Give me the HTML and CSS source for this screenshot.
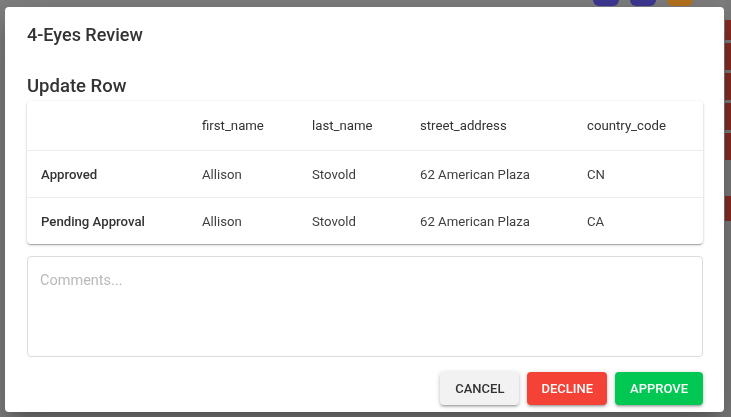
FILE: index.html
```html
<!DOCTYPE html>
<html lang="en">
<head>
<meta charset="utf-8">
<title>4-Eyes Review</title>
<link rel="stylesheet" href="styles.css">
</head>
<body>
<div class="page">
  <div class="main">
    <div class="toolbar">
      <span class="tb-btn purple"></span>
      <span class="tb-btn purple"></span>
      <span class="tb-btn orange"></span>
    </div>
  </div>
  <div class="rail">
    <span class="rb rb-first"></span>
    <span class="rb"></span>
    <span class="rb"></span>
    <span class="rb"></span>
    <span class="rb"></span>
    <span class="rb rb-last"></span>
  </div>
</div>

<div class="overlay">
  <div class="modal">
    <h1 class="modal-title">4-Eyes Review</h1>
    <h2 class="section-title">Update Row</h2>
    <div class="card">
      <div class="trow head">
        <div class="cell"></div>
        <div class="cell">first_name</div>
        <div class="cell">last_name</div>
        <div class="cell">street_address</div>
        <div class="cell">country_code</div>
      </div>
      <div class="trow">
        <div class="cell label">Approved</div>
        <div class="cell">Allison</div>
        <div class="cell">Stovold</div>
        <div class="cell">62 American Plaza</div>
        <div class="cell">CN</div>
      </div>
      <div class="trow last">
        <div class="cell label">Pending Approval</div>
        <div class="cell">Allison</div>
        <div class="cell">Stovold</div>
        <div class="cell">62 American Plaza</div>
        <div class="cell">CA</div>
      </div>
    </div>
    <textarea class="comments" placeholder="Comments..."></textarea>
    <div class="actions">
      <button class="btn cancel">Cancel</button>
      <button class="btn decline">Decline</button>
      <button class="btn approve">Approve</button>
    </div>
  </div>
</div>
</body>
</html>
```

FILE: styles.css
```css
html, body {
  margin: 0;
  padding: 0;
}
body {
  background: #7f7f7f;
  font-family: Roboto, "Liberation Sans", Arial, sans-serif;
  width: 731px;
  height: 417px;
  overflow: hidden;
}

/* dimmed background page */
.page {
  display: flex;
  height: 417px;
  overflow: hidden;
}
.main {
  flex: 1;
}
.toolbar {
  display: flex;
  justify-content: flex-end;
  gap: 11px;
  padding-right: 32px;
  height: 6px;
  overflow: hidden;
}
.tb-btn {
  width: 26px;
  height: 6px;
  border-radius: 0 0 6px 6px;
}
.tb-btn.purple { background: #3e3894; }
.tb-btn.orange { background: #b8741e; }
.rail {
  width: 6px;
  padding-top: 20px;
  display: flex;
  flex-direction: column;
  gap: 3px;
  background: #7c7c7c;
}
.rb {
  height: 27px;
  background: #8a2c23;
  flex: none;
}
.rb-first { height: 20px; }
.rb-last { margin-top: 33px; height: 25px; }

/* modal */
.overlay {
  position: fixed;
  inset: 0;
  padding: 7px 7px 5px 5px;
  box-sizing: border-box;
}
.modal {
  background: #fff;
  border-radius: 4px;
  height: 100%;
  box-sizing: border-box;
  padding: 17px 21px 7px 22px;
  box-shadow: 0 11px 15px -7px rgba(0,0,0,.2), 0 24px 38px 3px rgba(0,0,0,.14), 0 9px 46px 8px rgba(0,0,0,.12);
  display: flex;
  flex-direction: column;
}
.modal-title {
  margin: 0;
  font-size: 18px;
  font-weight: 500;
  line-height: 22px;
  color: #333;
  height: 22px;
}
.section-title {
  margin: 28px 0 3px;
  font-size: 18.5px;
  font-weight: 500;
  line-height: 24px;
  color: #333;
}
.card {
  background: #fff;
  border-radius: 4px;
  box-shadow: 0 1px 3px 0 rgba(0,0,0,.2), 0 1px 1px 0 rgba(0,0,0,.14), 0 2px 1px -1px rgba(0,0,0,.12);
  overflow: hidden;
  font-size: 13.2px;
}
.trow {
  display: grid;
  grid-template-columns: 161px 110px 108px 167px 130px;
  height: 47px;
  box-sizing: border-box;
  border-bottom: 1px solid #ececec;
  align-items: center;
}
.trow.head {
  height: 50px;
}
.trow.last {
  height: 46px;
  border-bottom: none;
}
.cell {
  padding-left: 14px;
  white-space: nowrap;
  color: #3f3f3f;
}
.head .cell {
  color: #333;
}
.cell.label {
  font-weight: 500;
  color: #333;
}
.comments {
  margin-top: 12px;
  height: 101px;
  flex: none;
  box-sizing: border-box;
  border: 1px solid #dcdcdc;
  border-radius: 4px;
  padding: 15px 12px;
  font-family: Roboto, "Liberation Sans", Arial, sans-serif;
  font-size: 14.5px;
  line-height: 18px;
  resize: none;
  outline: none;
  color: #333;
}
.comments::placeholder {
  color: #b9b9b9;
}
.actions {
  margin-top: 15px;
  display: flex;
  justify-content: flex-end;
  gap: 8px;
}
.btn {
  height: 33px;
  border: none;
  border-radius: 4px;
  padding: 0 15px;
  font-family: Roboto, "Liberation Sans", Arial, sans-serif;
  font-size: 13px;
  font-weight: 500;
  letter-spacing: 0;
  text-transform: uppercase;
  box-shadow: 0 1px 5px 0 rgba(0,0,0,.2), 0 2px 2px 0 rgba(0,0,0,.14), 0 3px 1px -2px rgba(0,0,0,.12);
}
.cancel {
  background: #f2f2f2;
  color: #333;
}
.decline {
  background: #f44336;
  color: #fff;
  padding: 0 14px;
}
.approve {
  background: #00c853;
  color: #fff;
}
```
